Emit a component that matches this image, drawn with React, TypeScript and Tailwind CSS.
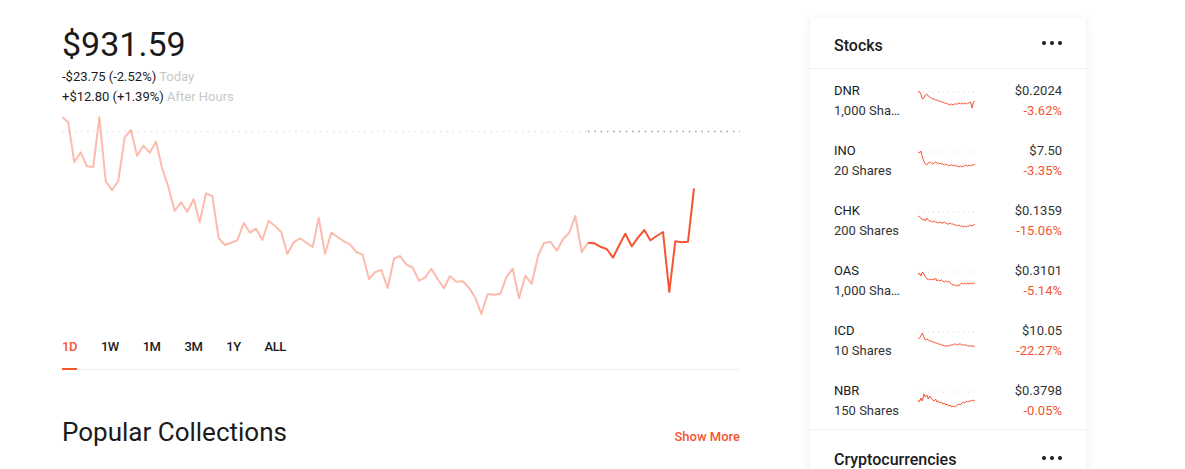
import React from "react";

// ─── Data ──────────────────────────────────────────────────────────────────────

const RED = "#f45531";

// page-space points, shifted into the svg box below
const HISTORY: [number, number][] = [
  [62.3,117.3],[68.3,122.3],[74.3,162.3],[80.7,152.3],[87,166.3],[93.3,167],[99.3,117.3],[105.7,181],
  [112,190.3],[118.3,181],[124.7,137.3],[131,130],[137,155.7],[143.3,145.7],[149.7,152.7],[156,141.7],
  [162,167.7],[168.3,186.7],[174.7,210.7],[181,202.3],[187.3,211.7],[193.7,199.3],[199.7,222.3],[206,193.3],
  [212.3,196],[218.7,238.3],[225,245],[231.3,242.7],[237.3,240.3],[243.7,223],[250,232.7],[256,228.7],
  [262.3,240],[268.7,221],[275,225.7],[281.3,232.3],[287.3,254],[293.7,242.3],[300,238.3],[306.3,242.7],
  [312.7,247],[318.7,217.7],[325,253.7],[331.3,232.7],[337.7,237],[344,241.3],[350,244.3],[356.3,252],
  [362.7,254.7],[369,279],[375.3,272],[381.3,270],[387.7,288],[394,258.7],[400,256],[406.3,264.3],
  [412.7,267.7],[419,280.7],[425,277.7],[431.3,268.7],[437.7,279.3],[444,288.3],[450,276],[456.3,281.7],
  [462.7,281.3],[469,287.7],[475.3,297.7],[481.3,314],[487.7,294],[494,294.7],[500.3,293.7],[506.7,276.7],
  [512.7,268.7],[519,298.3],[525.3,275.7],[531.7,284],[538,256],[544,243],[550.3,241.7],[556.7,250.7],
  [563,239.3],[569.3,232.7],[575.3,216],[581.7,252],[588,242.7],
];

const TODAY: [number, number][] = [
  [588,242.7],[594.3,243.3],[600.3,246.7],[606.7,249],[613,257.7],[619.3,245],[625.3,233.7],[631.7,246.3],
  [638,237.7],[644.3,230],[650.3,240.3],[656.7,236],[663,232],[669.3,292],[675.3,241.3],[681.7,242.3],
  [688,241.7],[694,188.3],
];

const toPath = (pts: [number, number][]) =>
  pts.map(([x, y], i) => `${i ? "L" : "M"}${(x - 62).toFixed(1)} ${(y - 106).toFixed(1)}`).join(" ");

type Stock = { symbol: string; shares: string; price: string; change: string; spark: number[] };

const STOCKS: Stock[] = [
  { symbol: "DNR", shares: "1,000 Shares", price: "$0.2024", change: "-3.62%",
    spark: [3,2.5,5,10,9,6,5,7,8,9,10,10,11,11,12,12,13,13,14,14,15,15,16,15,16,15,15,15,14,15,14,15,14,15,14,14,13,19,13,12] },
  { symbol: "INO", shares: "20 Shares", price: "$7.50", change: "-3.35%",
    spark: [3,4,2,8,12,15,16,14,13,14,15,14,13,14,15,14,15,15,16,15,16,17,16,16,17,16,17,17,18,17,18,17,17,16,17,16,17,16,16,15] },
  { symbol: "CHK", shares: "200 Shares", price: "$0.1359", change: "-15.06%",
    spark: [7,8,9,11,10,12,9,11,12,12,13,12,13,13,14,13,14,14,13,14,15,15,14,15,15,16,16,17,16,17,17,18,17,18,17,17,16,17,16,15] },
  { symbol: "OAS", shares: "1,000 Shares", price: "$0.3101", change: "-5.14%",
    spark: [6,4,7,3,5,8,9,11,10,11,10,11,9,12,11,12,11,12,13,12,13,12,14,15,16,16,17,16,17,15,14,15,14,15,14,15,14,15,14,14] },
  { symbol: "ICD", shares: "10 Shares", price: "$10.05", change: "-22.27%",
    spark: [10,9,7,4,8,11,10,11,12,12,13,13,14,14,15,15,16,16,17,17,17,17,16,16,16,15,15,16,15,15,16,16,16,16,17,17,17,17,17,18] },
  { symbol: "NBR", shares: "150 Shares", price: "$0.3798", change: "-0.05%",
    spark: [11,13,9,12,5,8,6,10,7,9,11,12,10,13,12,14,13,15,14,16,15,17,16,18,17,18,17,16,15,16,14,13,14,12,13,12,12,11,12,11] },
];

const TABS = ["1D", "1W", "1M", "3M", "1Y", "ALL"];

// ─── Pieces ────────────────────────────────────────────────────────────────────

function Dots() {
  return (
    <div className="flex items-center gap-[4px]">
      <span className="h-[4px] w-[4px] rounded-full bg-[#1b1b1b]" />
      <span className="h-[4px] w-[4px] rounded-full bg-[#1b1b1b]" />
      <span className="h-[4px] w-[4px] rounded-full bg-[#1b1b1b]" />
    </div>
  );
}

function Sparkline({ values }: { values: number[] }) {
  const step = 57 / (values.length - 1);
  const d = values.map((v, i) => `${i ? "L" : "M"}${(i * step).toFixed(2)} ${v}`).join(" ");
  return (
    <svg width="58" height="24" viewBox="0 0 58 24" className="ml-[18px] shrink-0">
      <line x1="0" y1="3" x2="58" y2="3" stroke="#d6d6d6" strokeWidth="1" strokeDasharray="1 4" />
      <path d={d} fill="none" stroke={RED} strokeWidth="1" strokeLinejoin="round" />
    </svg>
  );
}

function StockRow({ s }: { s: Stock }) {
  return (
    <div className="flex h-[60px] items-center px-6 pt-[3px] text-[13px] leading-5">
      <div className="w-[66px] shrink-0">
        <p className="text-[#1b1b1b]">{s.symbol}</p>
        <p className="truncate text-[#333333]">{s.shares}</p>
      </div>
      <Sparkline values={s.spark} />
      <div className="flex-1 text-right">
        <p className="text-[#333333]">{s.price}</p>
        <p style={{ color: RED }}>{s.change}</p>
      </div>
    </div>
  );
}

// ─── App ───────────────────────────────────────────────────────────────────────

export default function App() {
  return (
    <div className="flex h-[469px] w-[1185px] overflow-hidden bg-white font-['Roboto',sans-serif] text-[#1b1b1b]">
      {/* Main column */}
      <div className="w-[740px] shrink-0 pl-[62px]">
        <div className="pt-[24px]">
          <h1 className="h-[40px] text-[34px] leading-[40px]">$931.59</h1>
          <p className="mt-[3px] text-[13px] leading-5">
            -$23.75 (-2.52%) <span className="text-[#c8c8c8]">Today</span>
          </p>
          <p className="text-[13px] leading-5">
            +$12.80 (+1.39%) <span className="text-[#c8c8c8]">After Hours</span>
          </p>
        </div>

        {/* Chart */}
        <svg width="678" height="230" viewBox="0 1 678 230" className="block">
          <line x1="0" y1="25.5" x2="526" y2="25.5" stroke="#e2e2e2" strokeWidth="1.5" strokeDasharray="1.5 4.8" />
          <line x1="526" y1="25.5" x2="678" y2="25.5" stroke="#9d9d9d" strokeWidth="1.5" strokeDasharray="1.5 4.8" />
          <path d={toPath(HISTORY)} fill="none" stroke={RED} strokeOpacity="0.4" strokeWidth="2" strokeLinejoin="round" />
          <path d={toPath(TODAY)} fill="none" stroke={RED} strokeWidth="2" strokeLinejoin="round" />
        </svg>

        {/* Range tabs */}
        <div className="flex gap-6 border-b border-[#efefef]">
          {TABS.map((t, i) => (
            <button
              key={t}
              type="button"
              className={
                i === 0
                  ? "-mb-px border-b-2 border-[#f45531] pb-[11px] text-[13px] font-medium leading-5 tracking-[-0.5px] text-[#f45531]"
                  : "-mb-px border-b-2 border-transparent pb-[11px] text-[13px] font-medium leading-5 tracking-[-0.5px] text-[#1b1b1b]"
              }
            >
              {t}
            </button>
          ))}
        </div>

        {/* Popular collections */}
        <div className="mt-[46px] flex items-baseline justify-between">
          <h2 className="text-[26px] leading-8">Popular Collections</h2>
          <button type="button" className="text-[13px] font-medium text-[#f45531]">
            Show More
          </button>
        </div>
      </div>

      {/* Side card */}
      <div className="ml-[70px] mt-[18px] w-[276px] shrink-0 self-start rounded-[4px] bg-white shadow-[0_1px_10px_rgba(0,0,0,0.08)]">
        <div className="flex h-[51px] items-center justify-between border-b border-[#f0f0f0] px-6">
          <h3 className="mt-[6px] text-[16px] font-medium">Stocks</h3>
          <Dots />
        </div>
        {STOCKS.map((s) => (
          <StockRow key={s.symbol} s={s} />
        ))}
        <div className="flex h-[57px] items-center justify-between border-t border-[#f0f0f0] px-6">
          <h3 className="mt-[4px] text-[16px] font-medium">Cryptocurrencies</h3>
          <Dots />
        </div>
      </div>
    </div>
  );
}
